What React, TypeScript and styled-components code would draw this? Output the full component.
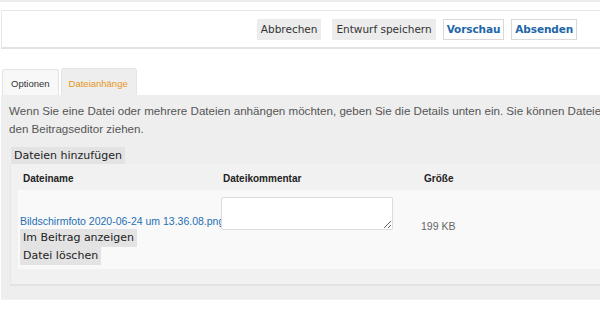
import React from "react";
import styled, { createGlobalStyle } from "styled-components";

const GlobalStyle = createGlobalStyle`
  html, body {
    margin: 0;
    padding: 0;
    background: #ffffff;
    overflow: hidden;
  }
  body {
    font-family: "Liberation Sans", Arial, sans-serif;
  }
`;

const Page = styled.div`
  width: 833px;
  display: flex;
  flex-direction: column;
`;

const TopEdge = styled.div`
  height: 0;
  border-bottom: 2px solid #ececec;
`;

const SubmitPanel = styled.div`
  margin: 8px 0 0 1px;
  background: #ffffff;
  border: 1px solid #e8e8e8;
  border-bottom: 2px solid #e3e3e3;
  padding: 8px 0 7px;
  display: flex;
  justify-content: center;
  align-items: center;
  gap: 7px;
`;

const Button = styled.button<{ $primary?: boolean; $gapAfter?: number }>`
  font-family: "DejaVu Sans", "Lucida Grande", sans-serif;
  font-size: 10.5px;
  font-weight: ${(p) => (p.$primary ? "bold" : "normal")};
  letter-spacing: ${(p) => (p.$primary ? "-0.1px" : "0")};
  color: ${(p) => (p.$primary ? "#2166a8" : "#333333")};
  background: ${(p) => (p.$primary ? "#ffffff" : "#ececec")};
  border: 1px solid ${(p) => (p.$primary ? "#d9d9d9" : "#ececec")};
  height: 21px;
  padding: 0 3px;
  margin: 0 ${(p) => p.$gapAfter ?? 0}px 0 0;
  cursor: pointer;
  line-height: 19px;
`;

const Tabs = styled.div`
  margin-top: 19px;
  padding-left: 2px;
  display: flex;
  align-items: flex-end;
  gap: 2px;
`;

const Tab = styled.div<{ $active?: boolean }>`
  font-size: 9.5px;
  height: ${(p) => (p.$active ? 27 : 26)}px;
  box-sizing: border-box;
  padding: 2px 8px 0 ${(p) => (p.$active ? 7 : 8)}px;
  display: flex;
  align-items: center;
  color: ${(p) => (p.$active ? "#e8961a" : "#333333")};
  background: ${(p) => (p.$active ? "#eeeeee" : "#f8f8f8")};
  border: 1px solid #e4e4e4;
  border-bottom: none;
  border-radius: 3px 3px 0 0;
`;

const Panel = styled.div`
  margin-left: 1px;
  background: #eeeeee;
  padding: 7px 0 13px 8px;
  border-bottom: 1px solid #f3f3f3;
  display: flex;
  flex-direction: column;
  align-items: flex-start;
`;

const Description = styled.p`
  margin: 0;
  max-width: 740px;
  font-size: 11.6px;
  line-height: 18px;
  color: #555555;
`;

const SmallButton = styled.button`
  font-family: "DejaVu Sans", "Lucida Grande", sans-serif;
  font-size: 11px;
  color: #222222;
  background: #e3e3e3;
  border: none;
  height: 18px;
  line-height: 18px;
  padding: 0 3px;
  cursor: pointer;
  white-space: nowrap;
`;

const AddButton = styled(SmallButton)`
  margin: 9px 0 0 2px;
  height: 17px;
  line-height: 17px;
`;

const FilesBox = styled.div`
  align-self: stretch;
  margin-left: 1px;
  background: #f1f1f1;
  border-left: 1px solid #e6e6e6;
  border-bottom: 2px solid #e2e2e2;
  padding: 0 0 15px 7px;
`;

const Columns = styled.div`
  display: grid;
  grid-template-columns: 200px 200px 1fr;
`;

const HeaderRow = styled(Columns)`
  height: 26px;
  align-items: center;
`;

const HeaderCell = styled.div<{ $pad: number }>`
  font-size: 10px;
  font-weight: bold;
  color: #222222;
  padding-left: ${(p) => p.$pad}px;
  padding-top: 2px;
`;

const FileRow = styled(Columns)`
  height: 79px;
  background: #f9f9f9;
`;

const NameCell = styled.div`
  align-self: end;
  padding: 0 0 4px 2px;
  display: flex;
  flex-direction: column;
  align-items: flex-start;
`;

const FileLink = styled.a`
  font-size: 10.5px;
  line-height: 16px;
  color: #2470b3;
  text-decoration: none;
  white-space: nowrap;
`;

const CommentCell = styled.div`
  padding: 7px 0 0 3px;
`;

const Comment = styled.textarea`
  display: block;
  width: 172px;
  height: 33px;
  box-sizing: border-box;
  margin: 0;
  border: 1px solid #dcdcdc;
  border-radius: 2px;
  background: #ffffff;
`;

const SizeCell = styled.div`
  align-self: center;
  padding: 0 0 7px 3px;
  font-size: 10.5px;
  color: #666666;
`;

export default function App() {
  return (
    <>
      <GlobalStyle />
      <Page>
        <TopEdge />
        <SubmitPanel>
          <Button $gapAfter={4}>Abbrechen</Button>
          <Button>Entwurf speichern</Button>
          <Button $primary>Vorschau</Button>
          <Button $primary>Absenden</Button>
        </SubmitPanel>
        <Tabs>
          <Tab>Optionen</Tab>
          <Tab $active>Dateianhänge</Tab>
        </Tabs>
        <Panel>
          <Description>
            Wenn Sie eine Datei oder mehrere Dateien anhängen möchten, geben Sie die Details unten ein. Sie können Dateien auch per Drag &amp; Drop in den Beitragseditor ziehen.
          </Description>
          <AddButton>Dateien hinzufügen</AddButton>
          <FilesBox>
            <HeaderRow>
              <HeaderCell $pad={5}>Dateiname</HeaderCell>
              <HeaderCell $pad={5}>Dateikommentar</HeaderCell>
              <HeaderCell $pad={6}>Größe</HeaderCell>
            </HeaderRow>
            <FileRow>
              <NameCell>
                <FileLink href="#">Bildschirmfoto 2020-06-24 um 13.36.08.png</FileLink>
                <SmallButton>Im Beitrag anzeigen</SmallButton>
                <SmallButton>Datei löschen</SmallButton>
              </NameCell>
              <CommentCell>
                <Comment />
              </CommentCell>
              <SizeCell>199 KB</SizeCell>
            </FileRow>
          </FilesBox>
        </Panel>
      </Page>
    </>
  );
}
